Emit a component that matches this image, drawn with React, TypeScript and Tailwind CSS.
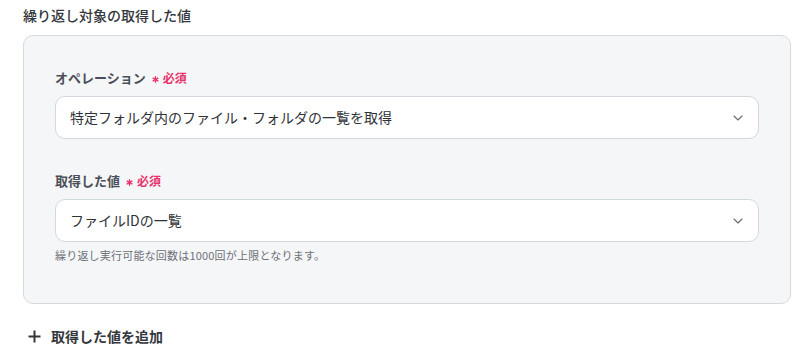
import { Asterisk, ChevronDown } from 'lucide-react';

const font = { fontFamily: '"Noto Sans CJK JP", "Noto Sans", sans-serif' };

interface FieldProps {
  label: string;
  value: string;
  hint?: string;
}

function SelectField({ label, value, hint }: FieldProps) {
  return (
    <div>
      <div className="flex h-5 items-center">
        <span className="text-[13px] font-bold text-[#4b4f57]">{label}</span>
        <Asterisk className="ml-[4px] mt-[3px] h-[11px] w-[11px] text-[#e8336d]" strokeWidth={3} />
        <span className="ml-[2px] text-[12px] font-bold text-[#e8336d]">必須</span>
      </div>
      <div className="mt-2 flex h-[43px] items-center justify-between rounded-[10px] border border-[#d3d7de] bg-white pl-[14px] pr-[12px]">
        <span className="text-[14px] text-[#2f3237]">{value}</span>
        <ChevronDown className="h-4 w-4 text-[#6b6f76]" strokeWidth={1.75} />
      </div>
      {hint && (
        <p className="mt-[5px] text-[11px] leading-4 tracking-[0.2px] text-[#6d7178]">{hint}</p>
      )}
    </div>
  );
}

export default function App() {
  return (
    <div className="h-[356px] w-[803px] bg-white" style={font}>
      <div className="pl-[23px] pr-[12px] pt-[4px]">
        <h2 className="h-[22px] text-[14px] font-medium leading-[22px] text-[#34373c]">
          繰り返し対象の取得した値
        </h2>
        <div className="mt-[9px] flex flex-col gap-[32px] rounded-[10px] border border-[#d6d9df] bg-[#f5f6f8] px-[31px] pb-[40px] pt-[32px]">
          <SelectField label="オペレーション" value="特定フォルダ内のファイル・フォルダの一覧を取得" />
          <SelectField
            label="取得した値"
            value="ファイルIDの一覧"
            hint="繰り返し実行可能な回数は1000回が上限となります。"
          />
        </div>
        <button className="mt-[22px] flex items-center gap-[10px] pl-[5px] text-[14px] font-bold text-[#34373c]">
          <svg width="13" height="13" viewBox="0 0 13 13" className="text-[#34373c]">
            <path d="M6.5 0.5v12M0.5 6.5h12" stroke="currentColor" strokeWidth="2" />
          </svg>
          取得した値を追加
        </button>
      </div>
    </div>
  );
}
